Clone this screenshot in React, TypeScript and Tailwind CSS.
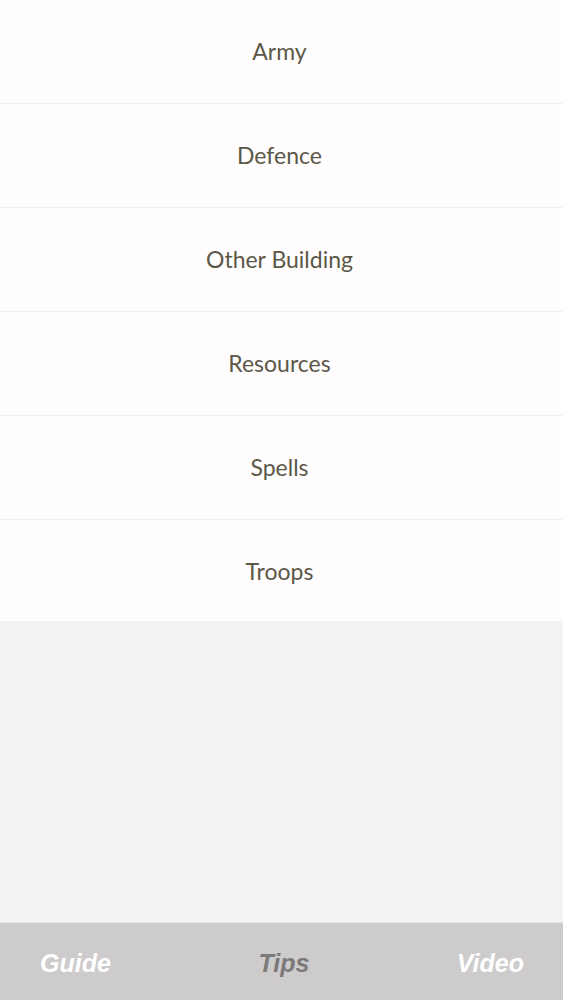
import React from 'react';

const categories = ['Army', 'Defence', 'Other Building', 'Resources', 'Spells', 'Troops'];

const tabs = [
  { label: 'Guide', active: false },
  { label: 'Tips', active: true },
  { label: 'Video', active: false },
];

export default function App() {
  return (
    <div className="flex h-[1000px] w-full flex-col bg-[#f4f3f3]">
      <ul className="bg-[#fffdfd]">
        {categories.map((name, i) => (
          <li
            key={name}
            className={`flex items-center justify-center pr-[4px] text-[23px] text-[#5c5848] font-['Lato',sans-serif] ${
              i < categories.length - 1 ? 'h-[104px] border-b border-[#f2f0ec]' : 'h-[101px] pt-[1px]'
            }`}
          >
            {name}
          </li>
        ))}
      </ul>
      <div className="flex-1" />
      <nav className="flex h-[78px] items-center justify-between border-t border-[#e6e4e4] bg-[#cdcbcb] pl-[40px] pr-[39px] pt-[4px]">
        {tabs.map((t) => (
          <span
            key={t.label}
            className={`text-[25px] font-bold italic font-['Liberation_Sans',sans-serif] ${
              t.active ? 'text-[#7b7979]' : 'text-white'
            }`}
          >
            {t.label}
          </span>
        ))}
      </nav>
    </div>
  );
}
